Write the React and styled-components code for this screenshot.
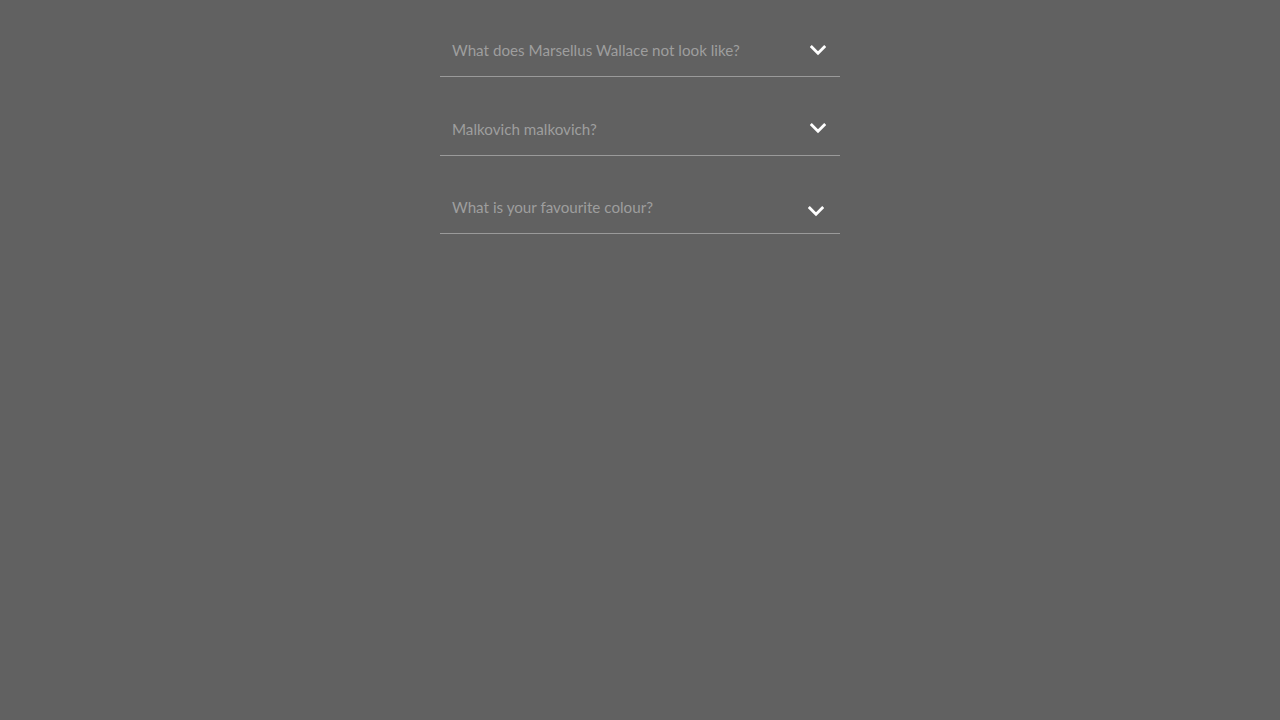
import React from "react";
import styled, { createGlobalStyle } from "styled-components";

const Global = createGlobalStyle`
  html, body { margin: 0; padding: 0; background: #616161; }
  body { font-family: "Lato", "Open Sans", sans-serif; }
`;

const Page = styled.div`
  min-height: 720px;
  background: #616161;
  padding-top: 24px;
  box-sizing: border-box;
`;

const List = styled.div`
  width: 400px;
  margin: 0 auto;
  display: flex;
  flex-direction: column;
  gap: 25.5px;
`;

const Item = styled.div`
  border-bottom: 1px solid #9a9a9a;
`;

const Header = styled.button`
  width: 100%;
  display: flex;
  align-items: center;
  justify-content: space-between;
  padding: 14px 14px 14px 12px;
  background: transparent;
  border: 0;
  cursor: pointer;
  font-family: inherit;
  text-align: left;
`;

const Question = styled.span`
  font-size: 15.2px;
  line-height: 24px;
  color: #9e9e9e;
`;

const Chevron = styled.svg`
  width: 16px;
  height: 11px;
  flex: none;
  transform: translate(${(p) => p.$dx || 0}px, ${(p) => p.$dy || 0}px);
`;

const items = [
  { q: "What does Marsellus Wallace not look like?" },
  { q: "Malkovich malkovich?" },
  { q: "What is your favourite colour?", dx: -2, dy: 4 },
];

export default function App() {
  return (
    <>
      <Global />
      <Page>
        <List>
          {items.map((it) => (
            <Item key={it.q}>
              <Header>
                <Question>{it.q}</Question>
                <Chevron viewBox="0 0 16 11" $dx={it.dx} $dy={it.dy}>
                  <path d="M1.8 2 L8 8.2 L14.2 2" fill="none" stroke="#fff" strokeWidth="2.8" strokeLinecap="square" />
                </Chevron>
              </Header>
            </Item>
          ))}
        </List>
      </Page>
    </>
  );
}
